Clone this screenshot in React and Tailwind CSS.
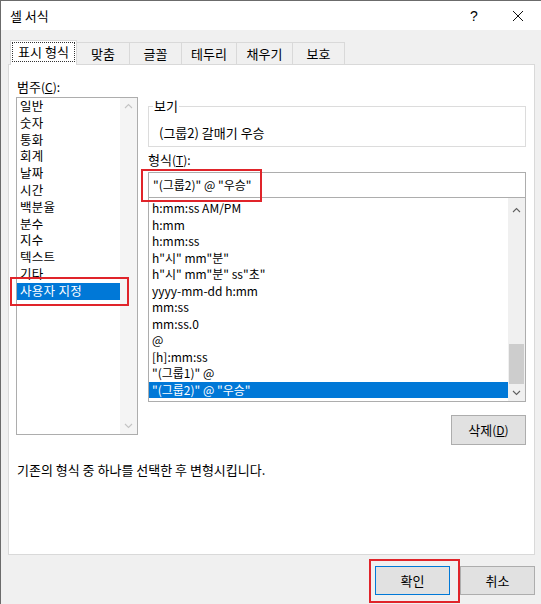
import React from 'react';

const categories = ['일반', '숫자', '통화', '회계', '날짜', '시간', '백분율', '분수', '지수', '텍스트', '기타', '사용자 지정'];

const formats = [
  'h:mm:ss AM/PM',
  'h:mm',
  'h:mm:ss',
  'h"시" mm"분"',
  'h"시" mm"분" ss"초"',
  'yyyy-mm-dd h:mm',
  'mm:ss',
  'mm:ss.0',
  '@',
  '[h]:mm:ss',
  '"(그룹1)" @',
  '"(그룹2)" @ "우승"',
];

const tabs = [
  { label: '맞춤', w: 'w-[53px]' },
  { label: '글꼴', w: 'w-[52px]' },
  { label: '테두리', w: 'w-[55px]' },
  { label: '채우기', w: 'w-[56px]' },
  { label: '보호', w: 'w-[52px]' },
];

// Hangul in the reference is a touch wider than Noto's at 12px, so bump those runs
const hk = (s) =>
  s.split(/([\uAC00-\uD7A3]+(?:\s+[\uAC00-\uD7A3]+)*)/).map((p, i) =>
    /[\uAC00-\uD7A3]/.test(p) ? (
      <span key={i} className="text-[13px]">
        {p}
      </span>
    ) : (
      p
    )
  );

const Chevron = ({ up, color }) => (
  <svg width="9" height="6" viewBox="0 0 9 6" fill="none">
    <path d={up ? 'M1 5 L4.5 1.5 L8 5' : 'M1 1 L4.5 4.5 L8 1'} stroke={color} strokeWidth="1.1" />
  </svg>
);

const App = () => {
  return (
    <div className="relative w-[541px] h-[604px] bg-[#f0f0f0] border-l border-t border-[#6b6b6b] font-['Noto_Sans_CJK_KR',sans-serif] text-[12px] text-black overflow-hidden">
      {/* title bar */}
      <div className="h-[29px] bg-white flex items-center pl-[9px]">
        <span className="leading-[16px] text-[13px]">셀 서식</span>
        <div className="ml-auto flex items-center">
          <span className="text-[14px] leading-[16px] w-[14px] text-center mr-[31px] font-['Liberation_Sans',sans-serif]">?</span>
          <svg width="12" height="12" viewBox="0 0 12 12" className="mr-[17px]">
            <path d="M1 1 L11 11 M11 1 L1 11" stroke="#111" strokeWidth="1" />
          </svg>
        </div>
      </div>

      <div className="pl-[7px]">
        {/* tabs */}
        <div className="flex items-end h-[24px] mt-[10px] ml-[2px]">
          <div className="relative z-10 h-[25px] w-[67px] -mb-px bg-white border-l border-t border-r border-[#d9d9d9] p-px">
            <div className="h-[20px] border border-dotted border-[#333] flex items-center justify-center leading-[16px] text-[13px]">
              표시 형식
            </div>
          </div>
          {tabs.map((t) => (
            <div
              key={t.label}
              className={`${t.w} h-[22px] border-t border-r border-[#d9d9d9] flex items-center justify-center leading-[16px] text-[13px]`}
            >
              {t.label}
            </div>
          ))}
        </div>

        {/* panel */}
        <div className="w-[527px] h-[491px] bg-white border border-[#d9d9d9] pl-[7px]">
          <div className="pt-[14px] leading-[16px] h-[30px] pl-px">
            {hk('범주')}(<span className="underline">C</span>):
          </div>
          <div className="mt-[2px] flex">
            {/* category list */}
            <div className="w-[122px] h-[338px] border border-[#adadad] flex">
              <div className="flex-1">
                {categories.map((c) => {
                  const sel = c === '사용자 지정';
                  return (
                    <div
                      key={c}
                      className={`h-[16.8px] leading-[16.8px] pl-[3px] text-[12.5px] tracking-[0.3px] whitespace-nowrap ${sel ? 'bg-[#0078d7] text-white' : ''}`}
                    >
                      {c}
                    </div>
                  );
                })}
              </div>
              <div className="w-[17px] bg-[#f4f4f4] flex flex-col items-center justify-between py-[5px]">
                <Chevron up color="#c4c4c4" />
                <Chevron color="#c4c4c4" />
              </div>
            </div>

            {/* right column */}
            <div className="ml-[10px] w-[378px] flex flex-col">
              <fieldset className="mt-px h-[49px] border border-[#dcdcdc] px-[9px]">
                <legend className="ml-[-5px] px-px leading-[16px] text-[13px]">보기</legend>
                <div className="mt-[11px] leading-[16px] pl-px text-[13px]">(그룹2) 갈매기 우승</div>
              </fieldset>
              <div className="mt-[5px] leading-[16px] h-[16px]">
                {hk('형식')}(<span className="underline">T</span>):
              </div>
              <div className="mt-[4px] h-[26px] border border-[#adadad] flex items-center pl-[4px] leading-[16px]">
                "(그룹2)" @ "우승"
              </div>
              <div className="-mt-px h-[205px] border border-[#adadad] flex">
                <div className="flex-1 pt-[2px]">
                  {formats.map((f, i) => {
                    const sel = i === formats.length - 1;
                    return (
                      <div
                        key={f}
                        className={`h-[16.5px] leading-[16.5px] pl-[3px] whitespace-nowrap ${sel ? 'bg-[#0078d7] text-white' : ''}`}
                      >
                        {f}
                      </div>
                    );
                  })}
                </div>
                <div className="w-[17px] bg-[#f0f0f0] flex flex-col items-center">
                  <div className="h-[17px] flex items-center justify-center mt-[3px]">
                    <Chevron up color="#606060" />
                  </div>
                  <div className="flex-1" />
                  <div className="w-[15px] h-[40px] bg-[#cdcdcd]" />
                  <div className="h-[17px] flex items-center justify-center">
                    <Chevron color="#606060" />
                  </div>
                </div>
              </div>
              <div className="mt-[13px] flex justify-end">
                <button className="w-[75px] h-[30px] bg-[#e1e1e1] border border-[#adadad] leading-[16px]">
                  {hk('삭제')}(<span className="underline">D</span>)
                </button>
              </div>
            </div>
          </div>
          <div className="mt-[17px] leading-[16px] pl-px text-[13px]">기존의 형식 중 하나를 선택한 후 변형시킵니다.</div>
        </div>

        {/* dialog buttons */}
        <div className="w-[527px] mt-[11px] flex justify-end gap-[10px]">
          <button className="w-[75px] h-[29px] bg-[#e1e1e1] border border-[#0078d7] leading-[16px] text-[13px]">확인</button>
          <button className="w-[75px] h-[29px] bg-[#e1e1e1] border border-[#adadad] leading-[16px] text-[13px]">취소</button>
        </div>
      </div>

      {/* red annotation boxes */}
      <div className="absolute left-[9px] top-[276px] w-[119px] h-[29px] border-2 border-[#e0242a]" />
      <div className="absolute left-[140px] top-[168px] w-[121px] h-[33px] border-2 border-[#e0242a]" />
      <div className="absolute left-[368px] top-[558px] w-[91px] h-[44px] border-2 border-[#e0242a]" />
    </div>
  );
};

export default App;
